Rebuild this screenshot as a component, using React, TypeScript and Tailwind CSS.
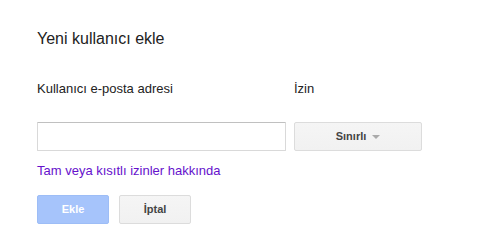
export default function App() {
  return (
    <div
      className="w-[503px] h-[249px] bg-white pl-[37px] pt-[29px] text-[#222]"
      style={{ fontFamily: '"Liberation Sans", Arial, sans-serif' }}
    >
      <div className="text-[16px] leading-[20px] text-[#222]">Yeni kullanıcı ekle</div>
      <div className="mt-[32px] flex text-[13px] leading-[16px] text-[#222]">
        <div className="w-[257px]">Kullanıcı e-posta adresi</div>
        <div>İzin</div>
      </div>
      <div className="mt-[25px] flex gap-[8px]">
        <input
          type="text"
          className="w-[249px] h-[29px] border border-[#d9d9d9] border-t-[#c0c0c0] rounded-[1px] px-2 text-[13px] outline-none"
        />
        <button className="w-[128px] h-[29px] rounded-[2px] border border-[#dcdcdc] bg-gradient-to-b from-[#f5f5f5] to-[#f1f1f1] flex items-center justify-center gap-[6px] text-[11px] font-bold text-[#444]">
          <span>Sınırlı</span>
          <span className="w-0 h-0 border-l-[4px] border-r-[4px] border-t-[4px] border-l-transparent border-r-transparent border-t-[#aaa] mt-[1px]" />
        </button>
      </div>
      <div className="mt-[12px] text-[13px] leading-[16px] text-[#6611cc]">
        Tam veya kısıtlı izinler hakkında
      </div>
      <div className="mt-[16px] flex gap-[10px]">
        <button className="w-[72px] h-[29px] rounded-[2px] border border-[#9dbdf6] bg-[#a6c4fb] text-[11px] font-bold text-white">
          Ekle
        </button>
        <button className="w-[72px] h-[29px] rounded-[2px] border border-[#dcdcdc] bg-gradient-to-b from-[#f5f5f5] to-[#f1f1f1] text-[11px] font-bold text-[#444]">
          İptal
        </button>
      </div>
    </div>
  );
}
